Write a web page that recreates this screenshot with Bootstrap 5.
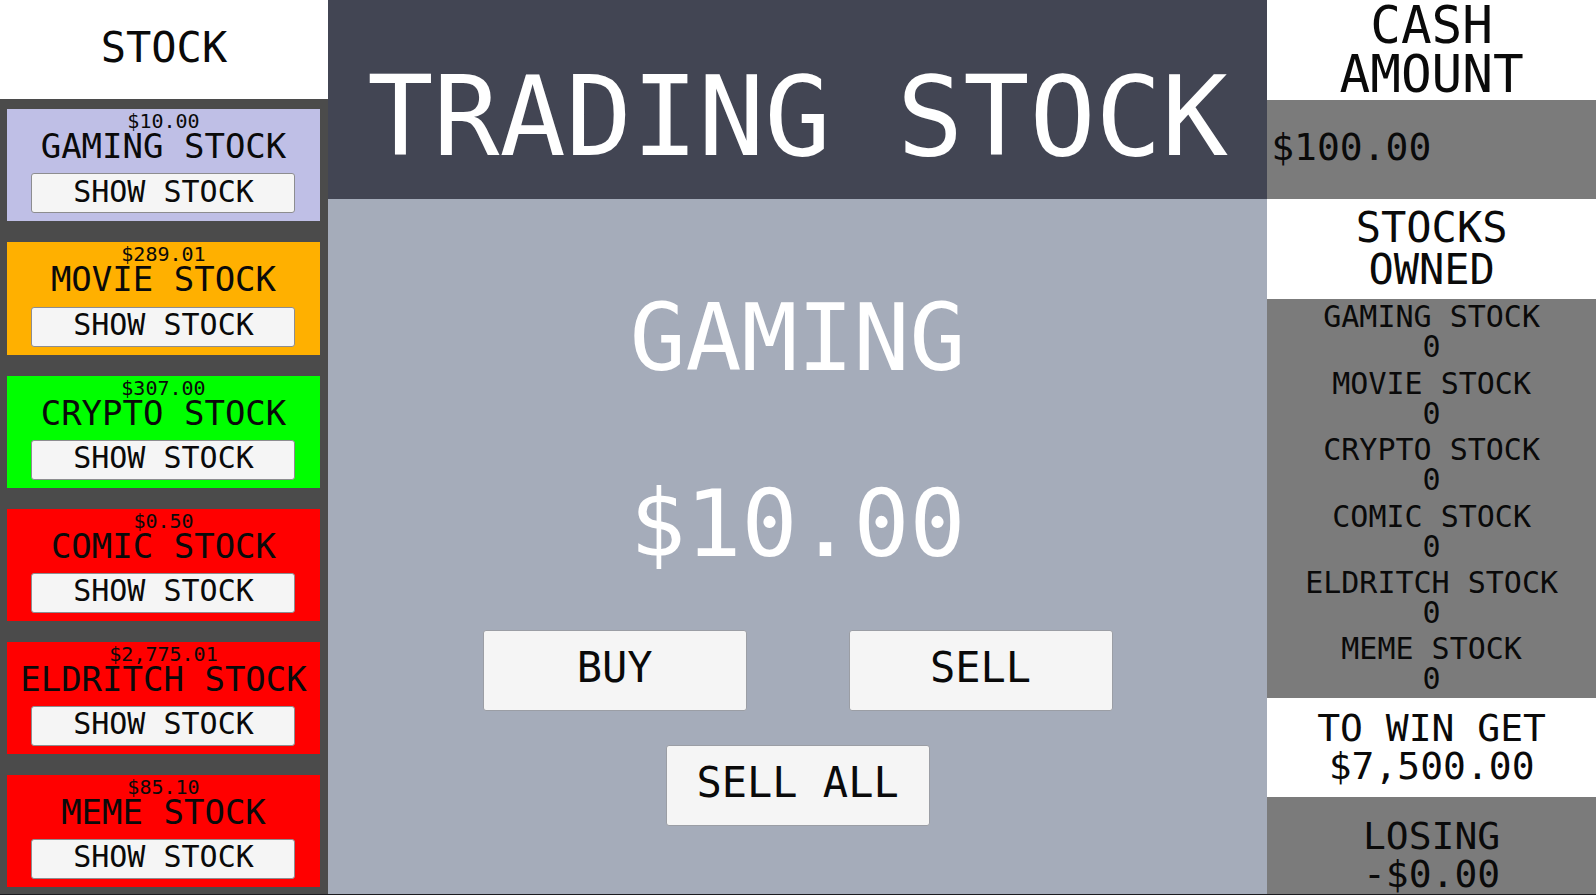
<!DOCTYPE html>
<html lang="en">
<head>
<meta charset="utf-8">
<meta name="viewport" content="width=device-width, initial-scale=1">
<title>Trading Stock</title>
<link href="https://cdn.jsdelivr.net/npm/bootstrap@5.3.0/dist/css/bootstrap.min.css" rel="stylesheet">
<style>
  body { font-family: "DejaVu Sans Mono", "Liberation Mono", monospace; color: #0a0a0a; background: #111; }
  h1, h2, h3, p, dl, dt, dd { margin: 0; font-weight: 400; }

  .game { display: grid; grid-template-columns: 20.55% minmax(0, 1fr) 20.6%; min-height: 100vh; border-bottom: 1px solid #1b1b1f; }

  .market { display: grid; grid-template-rows: minmax(0, 1fr) minmax(0, 8fr); background: #4b4b4b; }
  .trade { display: grid; grid-template-rows: minmax(0, 2fr) minmax(0, 7fr); background: #a5acba; }
  .wallet { display: grid; grid-template-rows: repeat(3, minmax(0, 100fr)) minmax(0, 400fr) minmax(0, 100fr) minmax(0, 97fr); background: #7b7b7b; }

  .size-xl { font-size: 51px; line-height: 49px; }
  .size-lg { font-size: 42px; line-height: 42px; }
  .size-md { font-size: 38px; line-height: 38px; }
  .size-sm { font-size: 30px; line-height: 30px; }

  .offers { display: grid; grid-template-rows: repeat(6, minmax(0, 1fr)); gap: 21px; padding: 10px 8px 7px 7px; }
  .offer { padding: 2px 0 8px; white-space: nowrap; }
  .offer-price { font-size: 20px; line-height: 20px; }
  .offer-name { font-size: 34px; line-height: 30px; }
  .tone-lavender { background: #bfbfe6; }
  .tone-orange { background: #ffb000; }
  .tone-green { background: #00ff00; }
  .tone-red { background: #ff0000; }

  .key { background: #f5f5f5; color: #0a0a0a; border: 1px solid #8d8d90; border-radius: 3px; padding: 0; }
  .key:hover, .key:focus { background: #e6e6e6; }
  .key-show { width: 264px; height: 40px; padding-bottom: 3px; }
  .key-trade { width: 264px; height: 81px; padding-bottom: 5px; border-color: #9b9ea5; }

  .masthead { background: #424553; padding-top: 36px; }
  .masthead h1 { font-size: 110px; line-height: 110px; white-space: nowrap; }
  .quote { font-size: 93px; line-height: 96px; }
  .desk { padding-top: 91px; }
  .desk-rows { gap: 90px; margin-bottom: 58px; }
  .desk-keys { gap: 102px; margin-bottom: 34px; }

  .holdings { display: grid; grid-template-rows: repeat(6, minmax(0, 1fr)); }
  .losing { padding-top: 18px; }
</style>
</head>
<body>
<main class="game">

  <aside class="market">
    <header class="bg-white d-flex align-items-center justify-content-center pb-1">
      <h2 class="size-lg">STOCK</h2>
    </header>
    <div class="offers text-center">
      <section class="offer tone-lavender d-flex flex-column align-items-center">
        <p class="offer-price">$10.00</p>
        <h3 class="offer-name">GAMING STOCK</h3>
        <button type="button" class="btn key key-show size-sm mt-auto">SHOW STOCK</button>
      </section>
      <section class="offer tone-orange d-flex flex-column align-items-center">
        <p class="offer-price">$289.01</p>
        <h3 class="offer-name">MOVIE STOCK</h3>
        <button type="button" class="btn key key-show size-sm mt-auto">SHOW STOCK</button>
      </section>
      <section class="offer tone-green d-flex flex-column align-items-center">
        <p class="offer-price">$307.00</p>
        <h3 class="offer-name">CRYPTO STOCK</h3>
        <button type="button" class="btn key key-show size-sm mt-auto">SHOW STOCK</button>
      </section>
      <section class="offer tone-red d-flex flex-column align-items-center">
        <p class="offer-price">$0.50</p>
        <h3 class="offer-name">COMIC STOCK</h3>
        <button type="button" class="btn key key-show size-sm mt-auto">SHOW STOCK</button>
      </section>
      <section class="offer tone-red d-flex flex-column align-items-center">
        <p class="offer-price">$2,775.01</p>
        <h3 class="offer-name">ELDRITCH STOCK</h3>
        <button type="button" class="btn key key-show size-sm mt-auto">SHOW STOCK</button>
      </section>
      <section class="offer tone-red d-flex flex-column align-items-center">
        <p class="offer-price">$85.10</p>
        <h3 class="offer-name">MEME STOCK</h3>
        <button type="button" class="btn key key-show size-sm mt-auto">SHOW STOCK</button>
      </section>
    </div>
  </aside>

  <section class="trade">
    <header class="masthead text-white d-flex align-items-center justify-content-center">
      <h1>TRADING STOCK</h1>
    </header>
    <div class="desk d-flex flex-column align-items-center">
      <div class="desk-rows d-flex flex-column text-white text-center">
        <h2 class="quote">GAMING</h2>
        <p class="quote">$10.00</p>
      </div>
      <div class="desk-keys d-flex justify-content-center">
        <button type="button" class="btn key key-trade size-lg">BUY</button>
        <button type="button" class="btn key key-trade size-lg">SELL</button>
      </div>
      <button type="button" class="btn key key-trade size-lg">SELL ALL</button>
    </div>
  </section>

  <aside class="wallet text-center">
    <header class="bg-white d-flex align-items-center justify-content-center">
      <h2 class="size-xl">CASH<br>AMOUNT</h2>
    </header>
    <div class="d-flex align-items-center ps-1 pb-1">
      <p class="size-md">$100.00</p>
    </div>
    <header class="bg-white d-flex align-items-center justify-content-center">
      <h2 class="size-lg">STOCKS<br>OWNED</h2>
    </header>
    <dl class="holdings size-sm">
      <div class="d-flex flex-column justify-content-center"><dt>GAMING STOCK</dt><dd>0</dd></div>
      <div class="d-flex flex-column justify-content-center"><dt>MOVIE STOCK</dt><dd>0</dd></div>
      <div class="d-flex flex-column justify-content-center"><dt>CRYPTO STOCK</dt><dd>0</dd></div>
      <div class="d-flex flex-column justify-content-center"><dt>COMIC STOCK</dt><dd>0</dd></div>
      <div class="d-flex flex-column justify-content-center"><dt>ELDRITCH STOCK</dt><dd>0</dd></div>
      <div class="d-flex flex-column justify-content-center"><dt>MEME STOCK</dt><dd>0</dd></div>
    </dl>
    <div class="bg-white d-flex align-items-center justify-content-center">
      <p class="size-md">TO WIN GET<br>$7,500.00</p>
    </div>
    <div class="losing d-flex align-items-center justify-content-center">
      <p class="size-md">LOSING<br>-$0.00</p>
    </div>
  </aside>

</main>
<script src="https://cdn.jsdelivr.net/npm/bootstrap@5.3.0/dist/js/bootstrap.bundle.min.js"></script>
</body>
</html>
